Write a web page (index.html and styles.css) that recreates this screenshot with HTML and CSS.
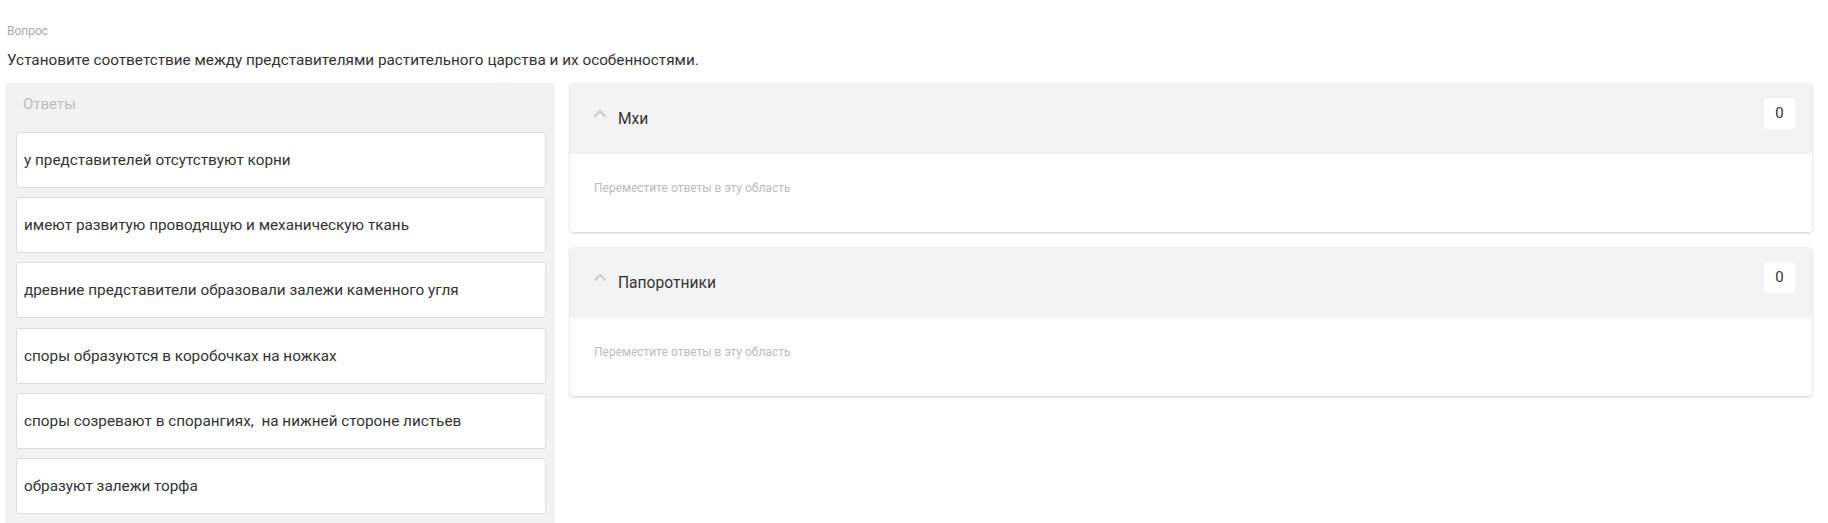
FILE: index.html
```html
<!DOCTYPE html>
<html lang="ru">

<head>
    <meta charset="UTF-8">
    <meta name="viewport" content="width=device-width, initial-scale=1.0">
    <title>Вопрос</title>
    <link rel="stylesheet" href="styles.css">
</head>

<body>
    <div class="page">
        <div class="label">Вопрос</div>
        <div class="question">Установите соответствие между представителями растительного царства и их особенностями.</div>

        <div class="board">
            <div class="answers">
                <div class="answers-title">Ответы</div>
                <div class="card">у представителей отсутствуют корни</div>
                <div class="card">имеют развитую проводящую и механическую ткань</div>
                <div class="card">древние представители образовали залежи каменного угля</div>
                <div class="card">споры образуются в коробочках на ножках</div>
                <div class="card">споры созревают в спорангиях,&nbsp; на нижней стороне листьев</div>
                <div class="card">образуют залежи торфа</div>
            </div>

            <div class="groups">
                <div class="group">
                    <div class="group-head">
                        <svg class="chevron" width="14" height="9" viewBox="0 0 14 9">
                            <path d="M1.5 7.5 L7 2 L12.5 7.5" fill="none" stroke="#c4c4c4" stroke-width="1.6"/>
                        </svg>
                        <span class="group-name">Мхи</span>
                        <span class="count">0</span>
                    </div>
                    <div class="group-body">Переместите ответы в эту область</div>
                </div>

                <div class="group">
                    <div class="group-head">
                        <svg class="chevron" width="14" height="9" viewBox="0 0 14 9">
                            <path d="M1.5 7.5 L7 2 L12.5 7.5" fill="none" stroke="#c4c4c4" stroke-width="1.6"/>
                        </svg>
                        <span class="group-name">Папоротники</span>
                        <span class="count">0</span>
                    </div>
                    <div class="group-body">Переместите ответы в эту область</div>
                </div>
            </div>
        </div>
    </div>
</body>

</html>
```

FILE: styles.css
```css
* {
    box-sizing: border-box;
}

body {
    margin: 0;
    font-family: Roboto, "Liberation Sans", sans-serif;
    color: #333;
    background: #fff;
    overflow: hidden;
}

.page {
    padding: 22px 16px 0 6px;
}

.label {
    font-size: 12px;
    color: #aaa;
    padding-left: 1px;
    line-height: 18px;
}

.question {
    font-size: 15.3px;
    line-height: 20px;
    margin-top: 10px;
    padding-left: 1px;
}

.board {
    display: grid;
    grid-template-columns: 548px 1fr;
    gap: 16px;
    margin-top: 13px;
    align-items: start;
}

.answers {
    background: #f2f2f2;
    border-radius: 4px;
    box-shadow: 0 1px 3px rgba(0, 0, 0, 0.12);
    padding: 0 8px 12px 10px;
}

.answers-title {
    font-size: 15px;
    color: #bdbdbd;
    height: 49px;
    line-height: 42px;
    padding-left: 7px;
}

.card {
    background: #fff;
    border: 1px solid #dcdcdc;
    border-radius: 3px;
    height: 56px;
    line-height: 54px;
    padding-left: 7px;
    font-size: 15.3px;
    margin-bottom: 9.2px;
}

.groups {
    display: flex;
    flex-direction: column;
    gap: 15px;
}

.group {
    background: #fff;
    border-radius: 4px;
    box-shadow: 0 1px 3px rgba(0, 0, 0, 0.2);
    overflow: hidden;
}

.group-head {
    background: #f3f3f3;
    height: 71px;
    display: flex;
    align-items: center;
    padding: 0 17px 0 23px;
}

.chevron {
    margin-top: -10px;
}

.group-name {
    font-size: 15.6px;
    margin-left: 11px;
    flex: 1;
}

.count {
    background: #fff;
    border-radius: 4px;
    width: 31px;
    height: 31px;
    line-height: 31px;
    text-align: center;
    font-size: 15px;
    margin-top: -11px;
}

.group-body {
    height: 78px;
    padding: 27px 0 0 24px;
    font-size: 12px;
    color: #bbb;
}
```
